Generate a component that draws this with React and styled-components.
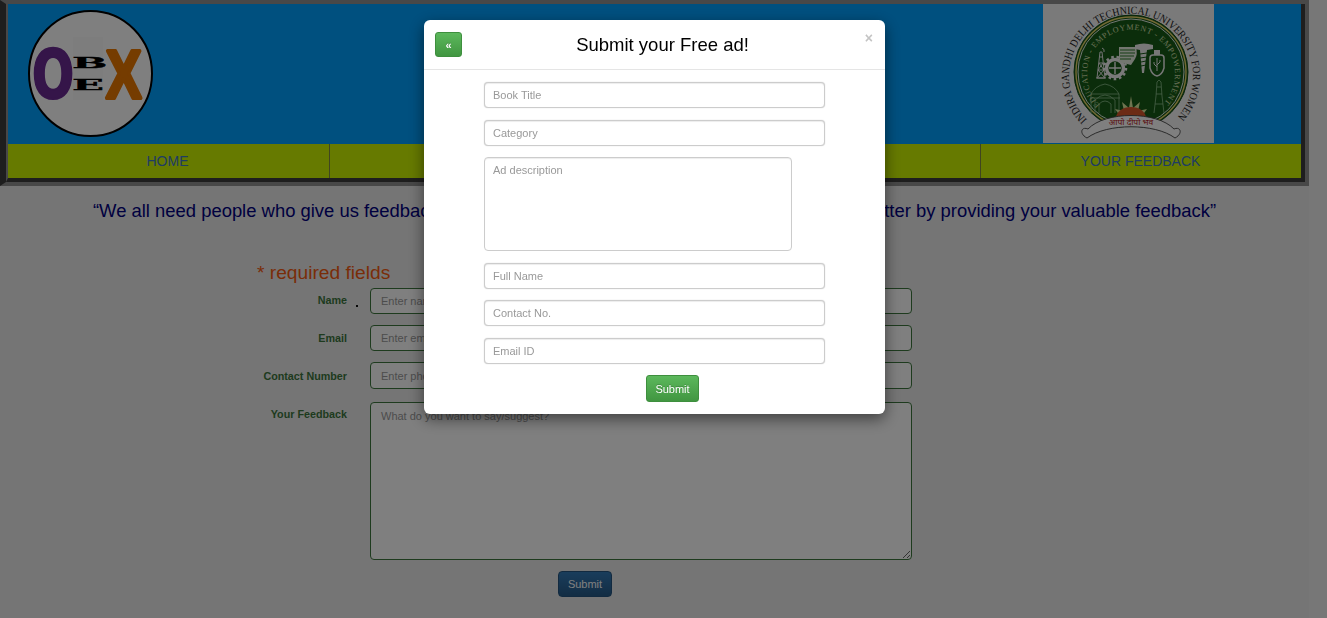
import React from "react";
import styled, { createGlobalStyle } from "styled-components";

const GlobalStyle = createGlobalStyle`
  html, body {
    margin: 0;
    padding: 0;
    background: #efefef;
    font-family: "Liberation Sans", Arial, sans-serif;
    overflow: hidden;
  }
  * {
    box-sizing: border-box;
  }
`;

const Page = styled.div`
  width: 1309px;
  height: 618px;
  background: #eaeaea;
`;

const HeaderFrame = styled.header`
  height: 186px;
  border-style: solid;
  border-color: #909090;
  border-width: 4px 4px 4px 6px;
  border-left-color: #3c3c3c;
`;

const HeaderInner = styled.div`
  height: 100%;
  border-style: solid;
  border-color: #3c3c3c;
  border-width: 0 4px 4px 2px;
  border-left-color: #909090;
  display: flex;
  flex-direction: column;
`;

const Banner = styled.div`
  height: 140px;
  background: #00a0ff;
  display: flex;
  justify-content: space-between;
  align-items: flex-start;
  padding: 0 87px 0 20px;
`;

const LogoSvg = styled.svg`
  display: block;
  width: 127px;
  height: 128px;
  margin-top: 6px;
`;

const EmblemSvg = styled.svg`
  display: block;
  width: 171px;
  height: 139px;
`;

const Nav = styled.nav`
  height: 34px;
  background: #ccf500;
  display: flex;
`;

const NavItem = styled.a`
  flex: 0 0 ${(p) => p.$width}px;
  display: flex;
  align-items: center;
  justify-content: center;
  padding-right: ${(p) => (p.$last ? 0 : 2)}px;
  font-size: 14px;
  color: #3f78c8;
  border-right: 1px solid ${(p) => (p.$last ? "transparent" : "#808a40")};
`;

const Quote = styled.p`
  margin: 15px 0 0;
  text-align: center;
  font-size: 18.43px;
  line-height: 20px;
  color: #000080;
`;

const FormArea = styled.section`
  margin: 41px 0 0 257px;
  width: 655px;
  position: relative;
`;

const Required = styled.div`
  font-size: 19.2px;
  line-height: 22px;
  color: #f45a10;
`;

const FormGrid = styled.div`
  display: grid;
  grid-template-columns: 90px 542px;
  column-gap: 23px;
  row-gap: 11px;
  margin-top: 4px;
`;

const Label = styled.label`
  font-size: 10.75px;
  font-weight: bold;
  color: #3c763d;
  text-align: right;
  white-space: nowrap;
  padding-top: ${(p) => p.$top}px;
  direction: rtl;
`;

const PageInput = styled.input`
  display: block;
  width: 100%;
  height: ${(p) => p.$height || 26}px;
  border: 1px solid #3c763d;
  border-radius: 4px;
  background: #fff;
  padding: 0 10px;
  font: 11px "Liberation Sans", Arial, sans-serif;
  &::placeholder {
    color: #999;
  }
`;

const PageTextarea = styled.textarea`
  display: block;
  width: 100%;
  height: 158px;
  margin: 2px 0 0;
  border: 1px solid #3c763d;
  border-radius: 4px;
  background: #fff;
  padding: 5px 10px;
  font: 11px/16px "Liberation Sans", Arial, sans-serif;
  &::placeholder {
    color: #999;
  }
`;

const StrayDot = styled.span`
  position: absolute;
  left: 99px;
  top: 43px;
  width: 2px;
  height: 2px;
  background: #111;
`;

const SubmitRow = styled.div`
  margin: 11px 0 0 301px;
`;

const PrimaryButton = styled.button`
  width: 54px;
  height: 26px;
  padding: 0;
  border: 1px solid #245580;
  border-radius: 4px;
  background: linear-gradient(#337ab7, #265a88);
  color: #fff;
  font: 11px "Liberation Sans", Arial, sans-serif;
`;

const Backdrop = styled.div`
  position: fixed;
  inset: 0;
  background: rgba(0, 0, 0, 0.5);
`;

const Modal = styled.div`
  position: fixed;
  left: 424px;
  top: 20px;
  width: 461px;
  height: 394px;
  background: #fff;
  border-radius: 6px;
  box-shadow: 0 5px 15px rgba(0, 0, 0, 0.5);
`;

const ModalHeader = styled.div`
  height: 50px;
  padding: 12px 22px 0 11px;
  display: flex;
  align-items: flex-start;
  border-bottom: 1px solid #e5e5e5;
  position: relative;
`;

const GreenButton = styled.button`
  width: ${(p) => p.$width}px;
  height: ${(p) => p.$height}px;
  padding: 0;
  flex: none;
  border: 1px solid #3e8f3e;
  border-radius: 3px;
  background: linear-gradient(#5cb85c, #419641);
  color: #fff;
  font: ${(p) => (p.$bold ? "bold " : "")}11px "Liberation Sans", Arial, sans-serif;
  text-shadow: 0 -1px 0 rgba(0, 0, 0, 0.2);
`;

const ModalTitle = styled.h4`
  flex: 1;
  margin: 0;
  text-align: center;
  font-size: 18.5px;
  font-weight: normal;
  line-height: 25px;
  color: #000;
`;

const CloseMark = styled.span`
  position: absolute;
  right: 12px;
  top: 9px;
  font-size: 14px;
  font-weight: bold;
  line-height: 18px;
  color: #c4c4c4;
`;

const ModalBody = styled.form`
  padding: 12px 0 0 60px;
  display: flex;
  flex-direction: column;
  align-items: flex-start;
  gap: 11.5px;
`;

const ModalInput = styled.input`
  display: block;
  width: 341px;
  height: 26px;
  border: 1px solid #ccc;
  border-radius: 4px;
  box-shadow: inset 0 1px 1px rgba(0, 0, 0, 0.075), 0 0 1px rgba(0, 0, 0, 0.25);
  padding: 0 8px;
  font: 11px "Liberation Sans", Arial, sans-serif;
  &::placeholder {
    color: #999;
  }
`;

const ModalTextarea = styled.textarea`
  display: block;
  width: 308px;
  height: 94px;
  margin: 0;
  border: 1px solid #ccc;
  border-radius: 4px;
  box-shadow: inset 0 1px 1px rgba(0, 0, 0, 0.075);
  padding: 5px 8px;
  resize: none;
  font: 11px/14px "Liberation Sans", Arial, sans-serif;
  &::placeholder {
    color: #999;
  }
`;

const ModalSubmit = styled.div`
  margin-left: 162px;
`;

const Logo = () => (
  <LogoSvg viewBox="0 0 127 128">
    <ellipse cx="62.500" cy="63.500" rx="61.500" ry="62.500" fill="#fff" stroke="#000" strokeWidth="2" />
    <rect x="45" y="27" width="30" height="63" fill="#fbfbfb" />
    <text
      transform="translate(4 88) scale(0.74 1)"
      fontFamily="DejaVu Sans"
      fontWeight="bold"
      fontSize="67"
      fill="#6a2a92"
      stroke="#6a2a92"
      strokeWidth="2"
    >
      O
    </text>
    <text
      transform="translate(44 58) scale(3 1)"
      fontFamily="DejaVu Serif"
      fontWeight="bold"
      fontSize="14"
      stroke="#000"
      strokeWidth="0.300"
    >
      B
    </text>
    <text
      transform="translate(44 80) scale(3 1)"
      fontFamily="DejaVu Serif"
      fontWeight="bold"
      fontSize="14"
      stroke="#000"
      strokeWidth="0.300"
    >
      E
    </text>
    <text
      transform="translate(78 88) scale(0.78 1)"
      fontFamily="Liberation Sans"
      fontWeight="bold"
      fontSize="68"
      fill="#ea7800"
      stroke="#ea7800"
      strokeWidth="4"
      strokeLinejoin="round"
    >
      X
    </text>
  </LogoSvg>
);

// college seal, coordinates taken from the screenshot
const Emblem = () => (
  <EmblemSvg viewBox="0 0 171 139">
    <rect width="171" height="139" fill="#f4f4f4" />
    <defs>
      <path id="outerArc" d="M 44.200 115.800 A 62 62 0 1 1 131.800 115.800" />
      <path id="innerArc" d="M 57 101 A 44 44 0 1 1 119 101" />
    </defs>
    <circle cx="88" cy="68" r="57" fill="#175a17" stroke="#144c14" strokeWidth="1" />
    <circle cx="88" cy="68" r="55" fill="none" stroke="#e8d36a" strokeWidth="1.400" />
    <circle cx="88" cy="68" r="53" fill="none" stroke="#fff" strokeWidth="0.900" />
    <text fontFamily="Liberation Serif" fontSize="11" fill="#222">
      <textPath href="#outerArc" textLength="288" lengthAdjust="spacingAndGlyphs">
        INDIRA GANDHI DELHI TECHNICAL UNIVERSITY FOR WOMEN
      </textPath>
    </text>
    <text fontFamily="Liberation Serif" fontSize="8" fill="#d8e2b0">
      <textPath href="#innerArc" textLength="204">
        EDUCATION - EMPLOYMENT - EMPOWERMENT
      </textPath>
    </text>

    {/* tower */}
    <g fill="none" stroke="#e6e6e6" strokeWidth="1">
      <path d="M54 74 L57 48 L59 48 L62 74 Z" />
      <path d="M53 74 H63 M55 66 H61 M56 59 H60 M56.500 53 H59.500 M54 74 L61 66 M62 74 L55 66 M55 66 L60 59 M61 66 L56 59" />
      <path d="M59 44 Q62 45 61 48" />
    </g>

    {/* gear */}
    <circle cx="72" cy="64" r="8.500" fill="none" stroke="#f2f2f2" strokeWidth="3.500" />
    <circle
      cx="72"
      cy="64"
      r="11"
      fill="none"
      stroke="#f2f2f2"
      strokeWidth="2.500"
      strokeDasharray="2.600 2.700"
    />
    <path d="M72 58 V70 M66 64 H78" stroke="#f2f2f2" strokeWidth="1.400" />

    {/* open book */}
    <path d="M76 43 L93 43 Q95 50 92 55 L88 61 L76 58 Z" fill="#e6eee0" />
    <path
      d="M77 46 H92 M77 49 H92 M77 52 H91 M77 55 H88"
      stroke="#2a7a2a"
      strokeWidth="1.200"
    />

    {/* screw */}
    <path d="M92 41 Q101 38 110 41 L110 45 L104 46 L101 69 L99 69 L97 46 L92 45 Z" fill="#efefef" />
    <path
      d="M97 50 L104 49 M97 54 L104 53 M98 58 L103 57 M98 62 L103 61"
      stroke="#175a17"
      strokeWidth="1"
    />

    {/* usb stick */}
    <rect x="111" y="46" width="6" height="5" fill="#efefef" />
    <path
      d="M107 54 Q107 51 110 51 H118 Q121 51 121 54 V64 Q119 71 114 72 Q109 71 107 64 Z"
      fill="none"
      stroke="#efefef"
      strokeWidth="1.500"
    />
    <path
      d="M114 54 V67 M114 63 L111 60 V58 M114 61 L117 58 V56"
      stroke="#efefef"
      strokeWidth="1"
      fill="none"
    />

    {/* india gate */}
    <g fill="none" stroke="#8fc28f" strokeWidth="0.800">
      <path d="M48 109 V90 H76 V109 M52 109 V96 Q62 86 72 96 V109" />
      <path d="M48 90 Q52 82 62 80 Q72 82 76 90 M47 94 H77 M56 109 V100 Q62 94 68 100 V109" />
    </g>

    {/* minar */}
    <g fill="none" stroke="#8fc28f" strokeWidth="0.800">
      <path d="M111 109 L113 92 L114 78 L116 76 L118 78 L119 92 L121 109" />
      <path d="M112 100 H120 M113 90 H119 M114 83 H118" />
    </g>

    {/* sun */}
    <path
      d="M88 92 L90 104 L97 98 L95 107 L104 105 L99 112 H77 L72 105 L81 107 L79 98 L86 104 Z"
      fill="#dce8a0"
    />
    <path d="M73 114 A15 11 0 0 1 103 114 Z" fill="#d8562a" />

    {/* ribbon, white below it hides the bottom of the disc */}
    <path d="M42 134 C64 119 112 119 134 134 V139 H42 Z" fill="#f4f4f4" />
    <path
      d="M44 134 C36 130 38 122 45 125 C62 107 114 107 131 125 C138 122 140 130 132 134 C112 119 64 119 44 134 Z"
      fill="#fff"
      stroke="#444"
      strokeWidth="0.900"
    />
    <text
      x="88"
      y="120.500"
      textAnchor="middle"
      fontFamily="Noto Sans"
      fontSize="8.500"
      fill="#b52020"
    >
      आपो दीपो भव
    </text>
  </EmblemSvg>
);

export default function App() {
  return (
    <>
      <GlobalStyle />
      <Page>
        <HeaderFrame>
          <HeaderInner>
            <Banner>
              <Logo />
              <Emblem />
            </Banner>
            <Nav>
              <NavItem $width={322}>HOME</NavItem>
              <NavItem $width={326}>BOOKS</NavItem>
              <NavItem $width={325}>ABOUT US</NavItem>
              <NavItem $width={320} $last>
                YOUR FEEDBACK
              </NavItem>
            </Nav>
          </HeaderInner>
        </HeaderFrame>
        <Quote>
          “We all need people who give us feedback. That's how we improve. Help us make our website better by
          providing your valuable feedback”
        </Quote>
        <FormArea>
          <Required>* required fields</Required>
          <StrayDot />
          <FormGrid>
            <Label $top={6}>Name</Label>
            <PageInput placeholder="Enter name" />
            <Label $top={7}>Email</Label>
            <PageInput placeholder="Enter email" />
            <Label $top={8}>Contact Number</Label>
            <PageInput $height={27} placeholder="Enter phone number" />
            <Label $top={8}>Your Feedback</Label>
            <PageTextarea placeholder="What do you want to say/suggest?" />
          </FormGrid>
          <SubmitRow>
            <PrimaryButton type="button">Submit</PrimaryButton>
          </SubmitRow>
        </FormArea>
      </Page>
      <Backdrop />
      <Modal>
        <ModalHeader>
          <GreenButton type="button" $width={27} $height={25} $bold>
            «
          </GreenButton>
          <ModalTitle>Submit your Free ad!</ModalTitle>
          <CloseMark>×</CloseMark>
        </ModalHeader>
        <ModalBody>
          <ModalInput placeholder="Book Title" />
          <ModalInput placeholder="Category" />
          <ModalTextarea placeholder="Ad description" />
          <ModalInput placeholder="Full Name" />
          <ModalInput placeholder="Contact No." />
          <ModalInput placeholder="Email ID" />
          <ModalSubmit>
            <GreenButton type="button" $width={53} $height={27}>
              Submit
            </GreenButton>
          </ModalSubmit>
        </ModalBody>
      </Modal>
    </>
  );
}
